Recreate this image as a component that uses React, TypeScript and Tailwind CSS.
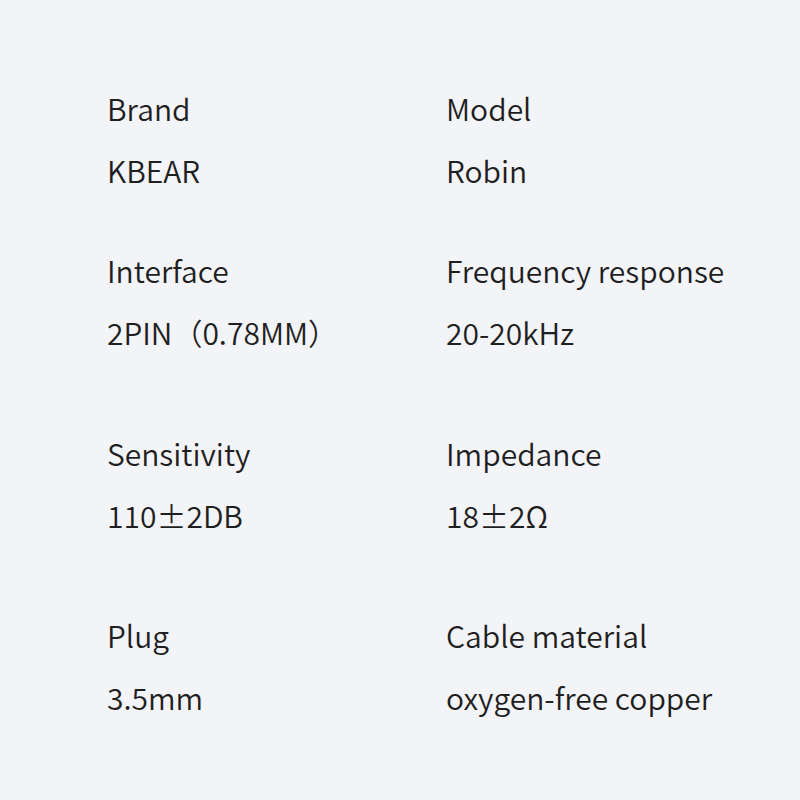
import React from "react";

const specs = [
  { label: "Brand", value: "KBEAR", pad: "" },
  { label: "Model", value: "Robin", pad: "" },
  { label: "Interface", value: "2PIN（0.78MM）", pad: "pt-[38px]" },
  { label: "Frequency response", value: "20-20kHz", pad: "pt-[38px]" },
  { label: "Sensitivity", value: "110±2DB", pad: "pt-[59px]" },
  { label: "Impedance", value: "18±2Ω", pad: "pt-[59px]" },
  { label: "Plug", value: "3.5mm", pad: "pt-[58px]" },
  { label: "Cable material", value: "oxygen-free copper", pad: "pt-[58px]" },
];

export default function App() {
  return (
    <div className="w-[800px] h-[800px] bg-[#f3f4f8] text-[#1f1f1f] font-['Noto_Sans_CJK_SC','Noto_Sans',sans-serif] pt-[77px] pl-[107px]">
      <div className="grid grid-cols-[339px_1fr]">
        {specs.map((s) => (
          <div key={s.label} className={s.pad}>
            <div className="text-[30px] leading-[62px] font-[350]">{s.label}</div>
            <div className="text-[30px] leading-[62px] font-[350]">{s.value}</div>
          </div>
        ))}
      </div>
    </div>
  );
}
